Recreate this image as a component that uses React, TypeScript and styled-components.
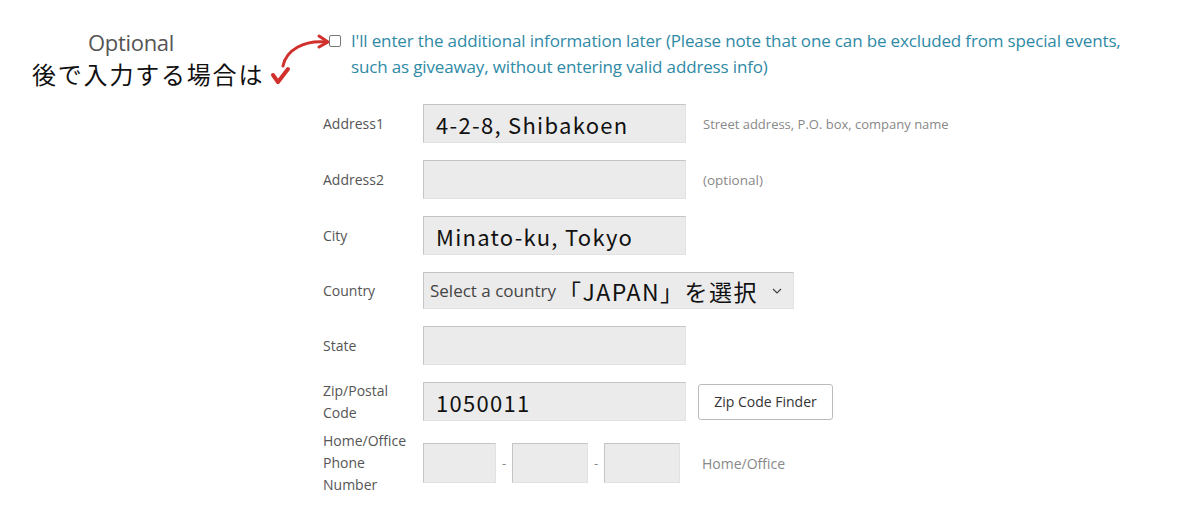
import styled, { createGlobalStyle } from 'styled-components'

const Global = createGlobalStyle`
  body {
    margin: 0;
    background: #fff;
    font-family: "Open Sans", "Noto Sans", sans-serif;
  }
`

const Page = styled.div`
  width: 1200px;
  height: 514px;
  overflow: hidden;
  padding-top: 28px;
  box-sizing: border-box;
`

const Top = styled.div`
  display: flex;
  align-items: flex-start;
`

const Note = styled.div`
  position: relative;
  width: 329px;
  flex-shrink: 0;
`

const NoteTitle = styled.div`
  width: 262px;
  text-align: center;
  font-size: 22px;
  line-height: 28px;
  color: #555;
  letter-spacing: -0.3px;
`

const NoteJa = styled.div`
  margin-left: 32px;
  font-family: "Noto Sans CJK JP", sans-serif;
  font-size: 24px;
  line-height: 36px;
  color: #111;
  letter-spacing: 1.8px;
`

const Arrow = styled.svg`
  position: absolute;
  left: 262px;
  top: 4px;
`

const Check = styled.label`
  display: flex;
  align-items: flex-start;
  gap: 10px;
  color: #2f8aa6;
  font-size: 17px;
  line-height: 26px;
  letter-spacing: -0.15px;
  width: 800px;
`

const Box = styled.span`
  flex-shrink: 0;
  width: 10px;
  height: 10px;
  margin-top: 7px;
  border: 1px solid #777;
  border-radius: 2px;
`

const Form = styled.div`
  margin: 12px 0 0 323px;
  display: flex;
  flex-direction: column;
  gap: 17px;
`

const Row = styled.div<{ $h?: number }>`
  display: grid;
  grid-template-columns: 100px auto auto;
  grid-template-rows: ${p => p.$h ?? 39}px;
  align-items: center;
  justify-content: start;
`

const Label = styled.div`
  font-size: 14px;
  line-height: 22px;
  color: #555;
`

const Field = styled.div<{ $w?: number }>`
  width: ${p => p.$w ?? 263}px;
  height: 39px;
  box-sizing: border-box;
  background: #ebebeb;
  border-top: 1px solid #c4c4c4;
  border-left: 1px solid #c4c4c4;
  border-right: 1px solid #e2e2e2;
  border-bottom: 1px solid #e2e2e2;
  padding-left: 12px;
  display: flex;
  align-items: center;
  font-family: "Noto Sans CJK JP", "Noto Sans", sans-serif;
  font-size: 22px;
  letter-spacing: 1.3px;
  color: #111;
`

const PhoneField = styled(Field)`
  height: 40px;
`

const Select = styled(Field)`
  width: 371px;
  height: 37px;
  padding-left: 6px;
  font-family: "Open Sans", sans-serif;
  font-size: 17px;
  letter-spacing: 0;
  color: #444;
  gap: 4px;
`

const SelectJa = styled.span`
  font-family: "Noto Sans CJK JP", sans-serif;
  font-size: 23px;
  color: #111;
  letter-spacing: 1.5px;
  margin-left: -2px;
`

const Chevron = styled.svg`
  margin-left: 10px;
`

const Hint = styled.div<{ $size?: number; $gap?: number }>`
  margin-left: ${p => p.$gap ?? 17}px;
  font-size: ${p => p.$size ?? 13}px;
  color: #888;
`

const Button = styled.div`
  margin-left: 12px;
  width: 135px;
  height: 36px;
  box-sizing: border-box;
  border: 1px solid #bbb;
  border-radius: 3px;
  display: flex;
  align-items: center;
  justify-content: center;
  font-size: 14px;
  color: #333;
`

const Phone = styled.div`
  display: flex;
  align-items: center;
`

const Dash = styled.span`
  width: 16px;
  text-align: center;
  font-size: 13px;
  color: #888;
`

const PhoneRow = styled(Row)`
  margin-top: 5px;
`

export default function App() {
  return (
    <Page>
      <Global />
      <Top>
        <Note>
          <NoteTitle>Optional</NoteTitle>
          <NoteJa>後で入力する場合は</NoteJa>
          <Arrow width="70" height="60" viewBox="0 0 70 60">
            <path d="M21 34 C 24 18, 42 8, 64 10" fill="none" stroke="#d0312d" strokeWidth="3" strokeLinecap="round" />
            <path d="M57 4 L66 10 L57 15" fill="none" stroke="#d0312d" strokeWidth="3" strokeLinecap="round" strokeLinejoin="round" />
            <path d="M11 43 L16 50 L26 37" fill="none" stroke="#d0312d" strokeWidth="4" strokeLinecap="round" strokeLinejoin="round" />
          </Arrow>
        </Note>
        <Check>
          <Box />
          <span>
            I'll enter the additional information later (Please note that one can be excluded from special events, such as giveaway, without entering valid address info)
          </span>
        </Check>
      </Top>
      <Form>
        <Row>
          <Label>Address1</Label>
          <Field>4-2-8, Shibakoen</Field>
          <Hint>Street address, P.O. box, company name</Hint>
        </Row>
        <Row>
          <Label>Address2</Label>
          <Field />
          <Hint $size={13.5}>(optional)</Hint>
        </Row>
        <Row>
          <Label>City</Label>
          <Field>Minato-ku, Tokyo</Field>
        </Row>
        <Row $h={37}>
          <Label>Country</Label>
          <Select>
            Select a country <SelectJa>「JAPAN」を選択</SelectJa>
            <Chevron width="10" height="6" viewBox="0 0 10 6">
              <path d="M1 1 L5 5 L9 1" fill="none" stroke="#444" strokeWidth="1.2" />
            </Chevron>
          </Select>
        </Row>
        <Row>
          <Label>State</Label>
          <Field />
        </Row>
        <Row>
          <Label>Zip/Postal<br />Code</Label>
          <Field>1050011</Field>
          <Button>Zip Code Finder</Button>
        </Row>
        <PhoneRow $h={40}>
          <Label>Home/Office<br />Phone<br />Number</Label>
          <Phone>
            <PhoneField $w={73} />
            <Dash>-</Dash>
            <PhoneField $w={76} />
            <Dash>-</Dash>
            <PhoneField $w={76} />
          </Phone>
          <Hint $size={14} $gap={22}>Home/Office</Hint>
        </PhoneRow>
      </Form>
    </Page>
  )
}
